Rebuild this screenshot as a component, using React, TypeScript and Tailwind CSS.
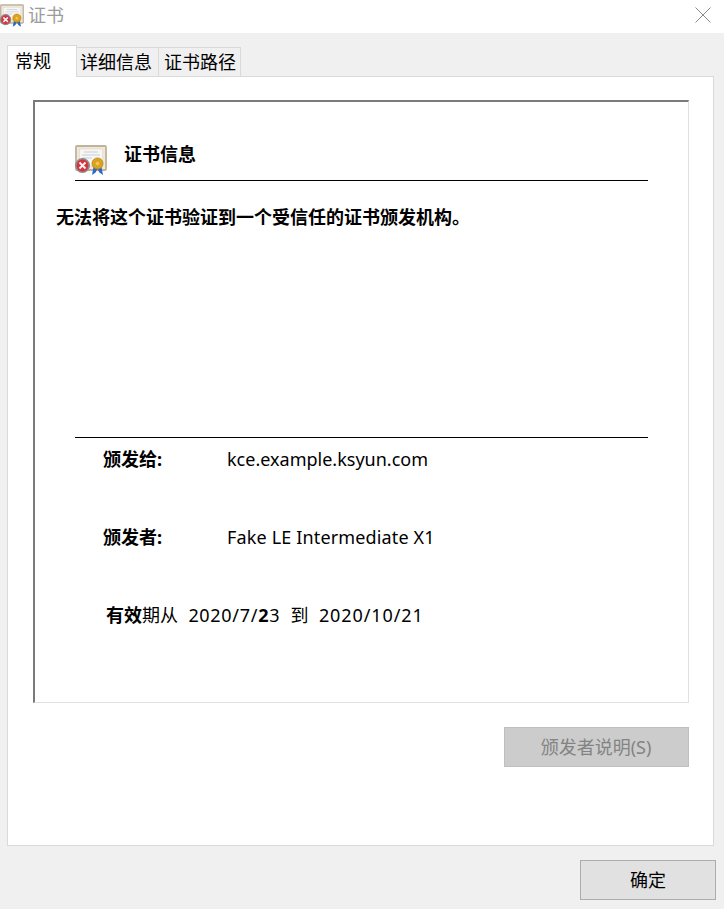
const FONT = "font-['Noto_Sans','Noto_Sans_CJK_SC',sans-serif]";

// Certificate with the red error badge and gold seal
function CertIcon({ className }: { className: string }) {
  return (
    <svg viewBox="0 0 32 30" className={className}>
      <rect x="1" y="1" width="30" height="24" rx="1" fill="#efe9dc" stroke="#bfb39c" strokeWidth="1.800" />
      <rect x="4.500" y="4" width="23" height="17" fill="#f8f7f3" stroke="#ddd5c5" strokeWidth="0.600" />
      <path d="M9 7h14M7 10h18M7 13h10" stroke="#c6cedb" strokeWidth="1" />
      <path d="M18.500 22l-1.500 8 3.600-2.400L23 23zM26.500 22l1.500 8-3.600-2.400L22 23z" fill="#2a68cc" />
      <circle cx="22.500" cy="18.500" r="5.500" fill="#dfa31c" stroke="#b27d10" strokeWidth="0.800" />
      <circle cx="22.500" cy="18.500" r="2.500" fill="#efc64c" stroke="#c08a15" strokeWidth="0.600" />
      <circle cx="7.500" cy="20.500" r="6.700" fill="#d5333d" stroke="#8f8b8b" strokeWidth="1.600" />
      <path d="M4.500 17.500l6 6M10.500 17.500l-6 6" stroke="#f6f0f0" strokeWidth="2" />
    </svg>
  );
}

export default function App() {
  return (
    <div className={`${FONT} flex h-[909px] w-[724px] flex-col overflow-hidden bg-[#f0f0f0] text-[18px] leading-[24px] text-black`}>
      {/* Title bar */}
      <div className="flex h-[33px] shrink-0 items-start justify-between bg-white">
        <div className="flex items-center">
          <CertIcon className="mt-[3px] h-[23px] w-[24px]" />
          <span className="ml-[4px] mt-[3px] text-[#9b9b9b]">证书</span>
        </div>
        <svg viewBox="0 0 16 16" className="mr-[13px] mt-[7px] h-[16px] w-[16px]">
          <path d="M0.500 0.500l15 15M15.500 0.500l-15 15" stroke="#8a8a8a" strokeWidth="1" fill="none" />
        </svg>
      </div>

      {/* Tabs */}
      <div className="relative z-10 ml-[7px] mt-[12px] flex h-[32px] items-end">
        <div className="h-[32px] w-[70px] border border-b-0 border-[#d9d9d9] bg-white pl-[7px] pt-[3px]">常规</div>
        <div className="h-[30px] w-[82px] border-y border-r border-[#d9d9d9] bg-[#f0f0f0] pl-[3px] pt-[2px]">详细信息</div>
        <div className="h-[30px] w-[82px] border-y border-r border-[#d9d9d9] bg-[#f0f0f0] pl-[5px] pt-[2px]">证书路径</div>
      </div>

      {/* Tab panel */}
      <div className="mx-[10px] -mt-[1px] ml-[7px] flex h-[770px] flex-col border border-[#d9d9d9] bg-white pl-[25px] pr-[24px] pt-[23px]">
        <div className="flex h-[603px] flex-col border-b border-r border-l-2 border-t-2 border-b-[#e0e0e0] border-l-[#7a7a7a] border-r-[#e0e0e0] border-t-[#7a7a7a]">
          <div className="ml-[40px] mr-[40px] mt-[40px] flex h-[39px] items-start border-b border-black">
            <CertIcon className="mt-[3px] h-[30px] w-[32px]" />
            <span className="ml-[17px] font-bold">证书信息</span>
          </div>
          <p className="ml-[21px] mt-[24px] font-bold">无法将这个证书验证到一个受信任的证书颁发机构。</p>
          <div className="ml-[40px] mr-[40px] mt-[208px] border-t border-black" />
          <div className="ml-[68px] mt-[9px] flex">
            <span className="w-[124px] font-bold">颁发给:</span>
            <span>kce.example.ksyun.com</span>
          </div>
          <div className="ml-[68px] mt-[54px] flex">
            <span className="w-[124px] font-bold">颁发者:</span>
            <span className="tracking-[0.15px]">Fake LE Intermediate X1</span>
          </div>
          <p className="ml-[71px] mt-[54px] whitespace-pre">
            <span className="font-bold">有效</span>期从  <span className="ml-[1px] tracking-[0.7px]">2020/7/<span className="font-bold">2</span>3</span>  <span className="ml-[1px]">到</span>  <span className="ml-[1px] tracking-[0.9px]">2020/10/21</span>
          </p>
        </div>
        <div className="mt-[24px] flex justify-end">
          <button className="h-[40px] w-[185px] border border-[#bfbfbf] bg-[#cccccc] pr-[1px] text-[#838383]">颁发者说明(S)</button>
        </div>
      </div>

      {/* Footer */}
      <div className="mr-[8px] mt-[14px] flex justify-end">
        <button className="h-[40px] w-[136px] border border-[#adadad] bg-[#e1e1e1]">确定</button>
      </div>
    </div>
  );
}
